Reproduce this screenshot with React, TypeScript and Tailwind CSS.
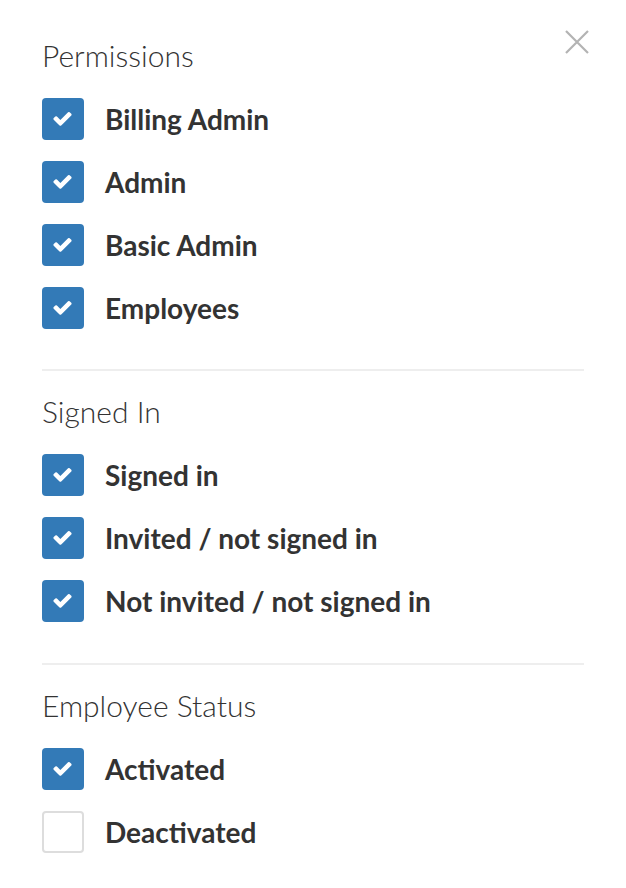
import React from "react";

const font = { fontFamily: "Lato, 'Noto Sans', sans-serif" };

function Check() {
  return (
    <svg viewBox="0 0 1792 1792" className="w-[21px] h-[21px] -mt-[2px] -ml-[1px]" fill="white">
      <path d="M1671 566q0 40-28 68l-724 724-136 136q-28 28-68 28t-68-28l-136-136-362-362q-28-28-28-68t28-68l136-136q28-28 68-28t68 28l294 295 656-657q28-28 68-28t68 28l136 136q28 28 28 68z" />
    </svg>
  );
}

function Row({ label, checked }: { label: string; checked: boolean }) {
  return (
    <div className="flex items-center h-[42px]">
      {checked ? (
        <div className="w-[42px] h-[42px] rounded-[4px] bg-[#337ab7] flex items-center justify-center shrink-0">
          <Check />
        </div>
      ) : (
        <div className="w-[42px] h-[42px] rounded-[4px] border-2 border-[#dddddd] bg-white shrink-0" />
      )}
      <span className="ml-[21px] text-[28px] font-bold text-[#333333] leading-none">{label}</span>
    </div>
  );
}

function Section({ title, items }: { title: string; items: [string, boolean][] }) {
  return (
    <div>
      <div className="h-[40px] pb-[4px] flex items-center text-[30px] font-light text-[#333333] leading-none">{title}</div>
      <div className="mt-[21px] flex flex-col gap-[21px]">
        {items.map(([l, c]) => (
          <Row key={l} label={l} checked={c} />
        ))}
      </div>
    </div>
  );
}

export default function App() {
  return (
    <div className="relative w-[626px] h-[888px] bg-white px-[42px] pt-[37px]" style={font}>
      <button className="absolute top-[30px] right-[37px] w-[24px] h-[24px]" aria-label="close">
        <svg viewBox="0 0 24 24" className="w-[24px] h-[24px]" stroke="#b3b3b3" strokeWidth="2.2" fill="none">
          <path d="M1 1L23 23M23 1L1 23" />
        </svg>
      </button>
      <Section
        title="Permissions"
        items={[
          ["Billing Admin", true],
          ["Admin", true],
          ["Basic Admin", true],
          ["Employees", true],
        ]}
      />
      <div className="mt-[40px] h-[2px] bg-[#eeeeee]" />
      <div className="mt-[22px]">
        <Section
          title="Signed In"
          items={[
            ["Signed in", true],
            ["Invited / not signed in", true],
            ["Not invited / not signed in", true],
          ]}
        />
      </div>
      <div className="mt-[41px] h-[2px] bg-[#eeeeee]" />
      <div className="mt-[22px]">
        <Section
          title="Employee Status"
          items={[
            ["Activated", true],
            ["Deactivated", false],
          ]}
        />
      </div>
    </div>
  );
}
